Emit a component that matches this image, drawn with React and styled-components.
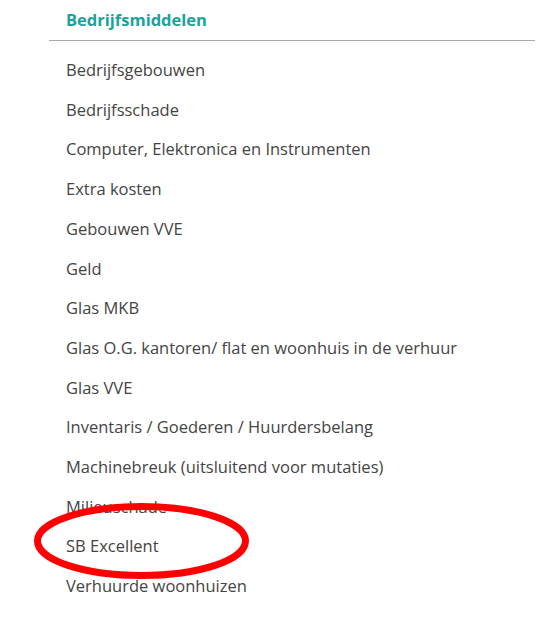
import React from "react";
import styled, { createGlobalStyle } from "styled-components";

const GlobalStyle = createGlobalStyle`
  html, body {
    margin: 0;
    padding: 0;
    background: #ffffff;
  }
  body {
    font-family: "Open Sans", sans-serif;
  }
`;

const StyledPage = styled.div`
  position: relative;
  width: 542px;
  height: 633px;
  overflow: hidden;
  padding: 0 7px 0 49px;
  box-sizing: border-box;
`;

const StyledHeader = styled.div`
  color: #1aa39a;
  font-size: 16.5px;
  font-weight: 700;
  padding: 9px 0 0 17px;
  height: 41px;
  box-sizing: border-box;
  border-bottom: 1px solid #a9a9a9;
  line-height: 22px;
`;

const StyledList = styled.ul`
  list-style: none;
  margin: 0;
  padding: 9px 0 0 17px;

  li {
    color: #444;
    font-size: 16.5px;
    line-height: 39.7px;
    white-space: nowrap;
  }
`;

const StyledCircle = styled.svg`
  position: absolute;
  left: 31px;
  top: 500px;
  pointer-events: none;
`;

const items = [
  "Bedrijfsgebouwen",
  "Bedrijfsschade",
  "Computer, Elektronica en Instrumenten",
  "Extra kosten",
  "Gebouwen VVE",
  "Geld",
  "Glas MKB",
  "Glas O.G. kantoren/ flat en woonhuis in de verhuur",
  "Glas VVE",
  "Inventaris / Goederen / Huurdersbelang",
  "Machinebreuk (uitsluitend voor mutaties)",
  "Milieuschade",
  "SB Excellent",
  "Verhuurde woonhuizen",
];

const App = () => (
  <StyledPage>
    <GlobalStyle />
    <StyledHeader>Bedrijfsmiddelen</StyledHeader>
    <StyledList>
      {items.map((item) => (
        <li key={item}>{item}</li>
      ))}
    </StyledList>
    <StyledCircle width="222" height="82" viewBox="0 0 222 82">
      <ellipse cx="110.5" cy="41" rx="104" ry="34.5" fill="none" stroke="#ff0000" strokeWidth="7" />
    </StyledCircle>
  </StyledPage>
);

export default App;
